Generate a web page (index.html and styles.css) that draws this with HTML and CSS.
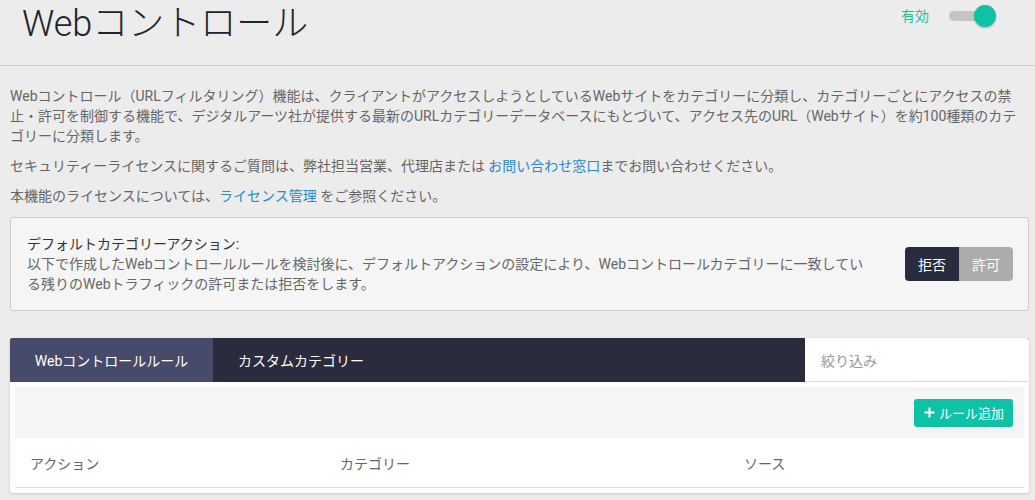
FILE: index.html
```html
<!DOCTYPE html>
<html lang="ja">
<head>
<meta charset="utf-8">
<link rel="stylesheet" href="styles.css">
</head>
<body>
<div class="page">
  <header class="header">
    <h1 class="title">Webコントロール</h1>
    <div class="status">
      <span class="status-label">有効</span>
      <span class="switch"><span class="knob"></span></span>
    </div>
  </header>

  <div class="intro">
    <p>Webコントロール（URLフィルタリング）機能は、クライアントがアクセスしようとしているWebサイトをカテゴリーに分類し、カテゴリーごとにアクセスの禁止・許可を制御する機能で、デジタルアーツ社が提供する最新のURLカテゴリーデータベースにもとづいて、アクセス先のURL（Webサイト）を約100種類のカテゴリーに分類します。</p>
    <p>セキュリティーライセンスに関するご質問は、弊社担当営業、代理店または <a class="link">お問い合わせ窓口</a>までお問い合わせください。</p>
    <p>本機能のライセンスについては、<a class="link">ライセンス管理</a> をご参照ください。</p>
  </div>

  <div class="default-box">
    <div class="default-text">
      <div class="default-title">デフォルトカテゴリーアクション:</div>
      <div class="default-desc">以下で作成したWebコントロールルールを検討後に、デフォルトアクションの設定により、Webコントロールカテゴリーに一致している残りのWebトラフィックの許可または拒否をします。</div>
    </div>
    <div class="seg">
      <span class="seg-btn seg-on">拒否</span>
      <span class="seg-btn seg-off">許可</span>
    </div>
  </div>

  <div class="panel">
    <div class="tabs">
      <span class="tab tab-active">Webコントロールルール</span>
      <span class="tab">カスタムカテゴリー</span>
      <span class="tab-fill"></span>
      <div class="filter">絞り込み</div>
    </div>
    <div class="panel-body">
      <div class="toolbar">
        <span class="add-btn"><svg class="plus" viewBox="0 0 12 12" width="11" height="11"><path d="M6 0.5v11M0.5 6h11" stroke="#fff" stroke-width="2.2" fill="none"/></svg>ルール追加</span>
      </div>
      <div class="thead">
        <span class="col col-action">アクション</span>
        <span class="col col-cat">カテゴリー</span>
        <span class="col col-src">ソース</span>
      </div>
    </div>
  </div>
</div>
</body>
</html>
```

FILE: styles.css
```css
* { box-sizing: border-box; }
html, body { margin: 0; padding: 0; }
body {
  background: #ececec;
  font-family: "Roboto", "Noto Sans CJK JP", sans-serif;
  color: #666;
  font-size: 14px;
  width: 1035px;
  height: 500px;
  overflow: hidden;
}
.page { padding: 0 6px 0 10px; }
.header {
  display: flex;
  justify-content: space-between;
  align-items: flex-start;
  height: 66px;
  border-bottom: 1px solid #cfcfcf;
  margin: 0 -6px 0 -10px;
  padding: 0 50px 0 22px;
}
.title {
  margin: 0;
  font-weight: 300;
  font-size: 36px;
  line-height: 46px;
  color: #22232f;
  padding-top: 1px;
}
.status { display: flex; align-items: center; gap: 20px; padding-top: 6px; }
.status-label { color: #1fbfa6; font-size: 14px; line-height: 20px; }
.switch {
  position: relative;
  width: 36px;
  height: 10px;
  border-radius: 5px;
  background: #c4c4c4;
}
.knob {
  position: absolute;
  right: -11px;
  top: -6px;
  width: 22px;
  height: 22px;
  border-radius: 50%;
  background: #0fc2a5;
  box-shadow: 0 1px 2px rgba(0,0,0,0.25);
}
.intro { padding-top: 20px; }
.intro p { margin: 0 0 10px; line-height: 20px; }
.link { color: #2a89c8; text-decoration: none; }
.default-box {
  margin-top: 11px;
  display: flex;
  align-items: center;
  justify-content: space-between;
  background: #f5f5f5;
  border: 1px solid #cccccc;
  border-radius: 3px;
  height: 94px;
  padding: 0 15px 0 16px;
  width: 1019px;
}
.default-text { width: 850px; line-height: 20px; }
.default-title { color: #333; }
.default-desc { color: #666; }
.seg { display: flex; border-radius: 4px; overflow: hidden; }
.seg-btn {
  width: 54px;
  height: 34px;
  display: flex;
  align-items: center;
  justify-content: center;
  color: #fff;
  font-size: 14px;
}
.seg-on { background: #292b3e; }
.seg-off { background: #acacac; }
.panel {
  margin-top: 27px;
  width: 1019px;
  background: #fff;
  border-radius: 3px;
  box-shadow: 0 1px 3px rgba(0,0,0,0.15);
  overflow: hidden;
}
.tabs { display: flex; height: 44px; background: #2a2b3d; }
.tab {
  display: flex;
  align-items: center;
  color: #fff;
  font-size: 14px;
  padding: 0 25px;
}
.tab-active {
  background: #474a69;
  width: 203px;
  justify-content: center;
  padding: 0;
}
.tab-fill { flex: 1; }
.filter {
  width: 224px;
  background: #fff;
  border-bottom: 1px solid #d8d8d8;
  color: #999;
  display: flex;
  align-items: center;
  padding-left: 16px;
}
.panel-body { padding: 5px 5px 5px 5px; }
.toolbar {
  height: 51px;
  background: #f5f5f5;
  display: flex;
  align-items: center;
  justify-content: flex-end;
  padding-right: 11px;
}
.add-btn {
  display: flex;
  align-items: center;
  gap: 4px;
  height: 28px;
  padding: 0 9px 0 10px;
  background: #0fc2a5;
  color: #fff;
  border-radius: 3px;
  font-size: 13px;
}
.plus { display: block; }
.thead {
  display: flex;
  height: 50px;
  align-items: center;
  border-bottom: 1px solid #dedede;
  color: #666;
}
.col { display: block; }
.col-action { width: 325px; padding-left: 15px; }
.col-cat { width: 404px; }
.col-src { flex: 1; }
```
